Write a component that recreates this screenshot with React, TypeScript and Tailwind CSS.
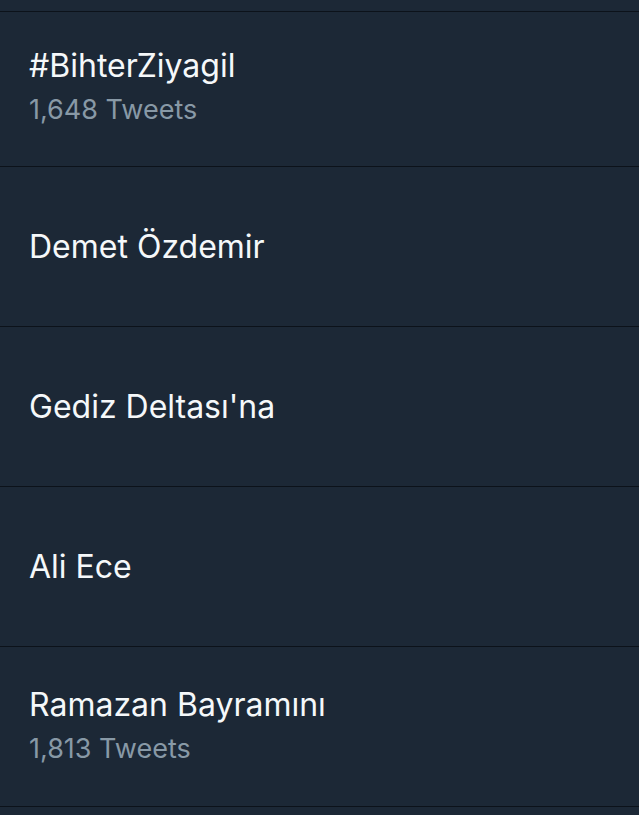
const TRENDS = [
  { name: "#BihterZiyagil", count: "1,648 Tweets", h: "h-[151px] pb-[3px]" },
  { name: "Demet Özdemir", h: "h-[159px]" },
  { name: "Gediz Deltası'na", h: "h-[159px]" },
  { name: "Ali Ece", h: "h-[159px]" },
  { name: "Ramazan Bayramını", count: "1,813 Tweets", h: "h-[158px] pb-[1px]" },
];

export default function App() {
  return (
    <div
      className="w-[639px] h-[815px] overflow-hidden bg-[#1c2836]"
      style={{ fontFamily: "Inter, 'Noto Sans', sans-serif" }}
    >
      <div className="h-[11px] border-b border-[#0c121a] box-content" />
      {TRENDS.map((t) => (
        <div
          key={t.name}
          className={`${t.h} box-content border-b border-[#0c121a] flex flex-col justify-center pl-[29px]`}
        >
          <div className="text-[32px] leading-[32px] text-[#f5f8fa]">{t.name}</div>
          {t.count && (
            <div className="text-[27px] leading-[30px] mt-[13px] text-[#8899a6]">{t.count}</div>
          )}
        </div>
      ))}
    </div>
  );
}
